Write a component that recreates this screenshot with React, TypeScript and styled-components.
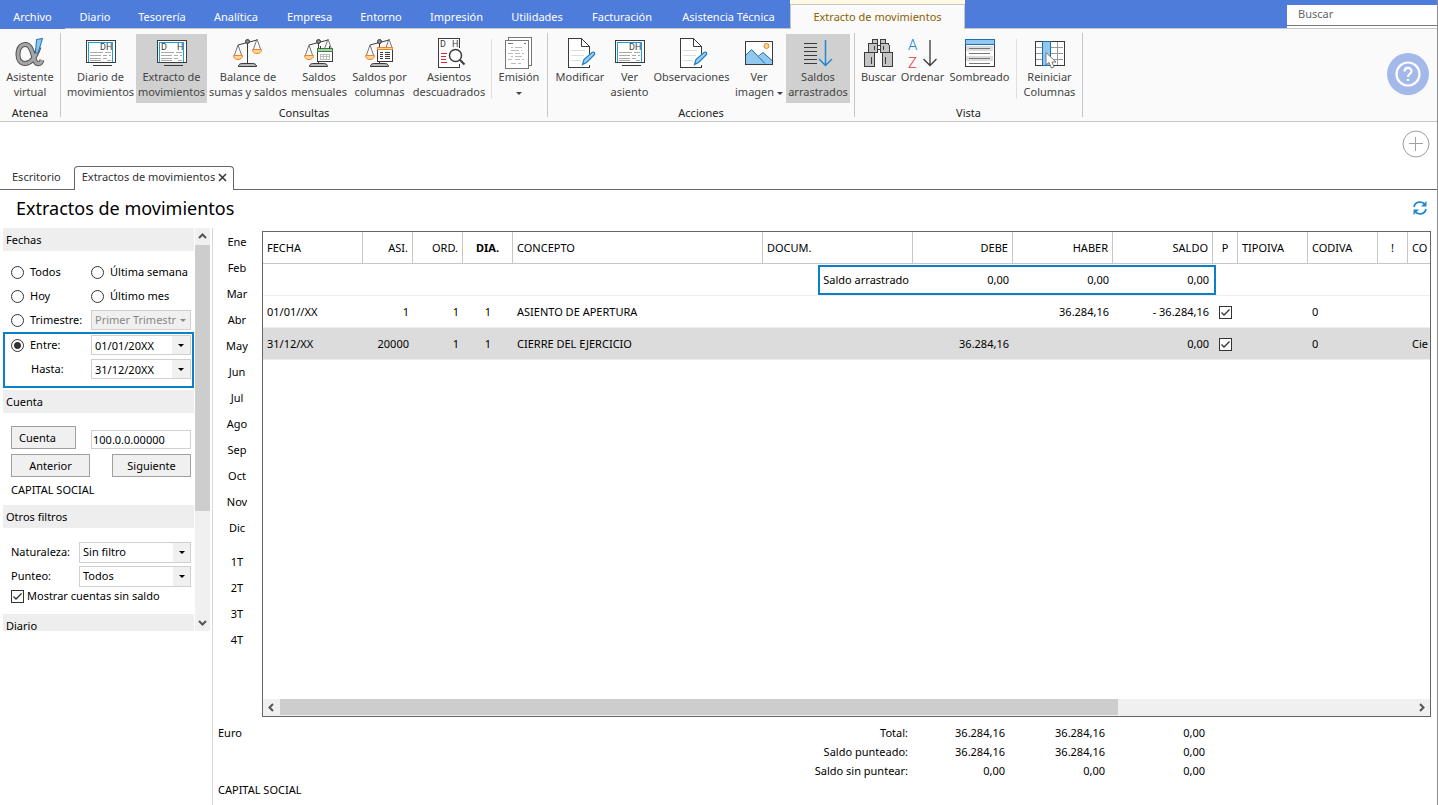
import React from "react";
import styled, { createGlobalStyle, css } from "styled-components";

const BLUE = "#4d7cdb";
const FRAME = "#0a80c8";
const INK = "#3b3b3b";

const GlobalStyle = createGlobalStyle`
  *, *::before, *::after { box-sizing: border-box; }
  body {
    margin: 0;
    background: #fff;
    color: #000;
    font-family: "Noto Sans", "Open Sans", sans-serif;
    font-size: 11px;
    line-height: 16px;
  }
  button, input, select { font: inherit; color: inherit; margin: 0; border-radius: 0; }
  button { background: none; border: 0; padding: 0; }
`;

const Page = styled.div`
  min-height: 100vh;
  display: flex;
  flex-direction: column;
  border-right: 1px solid #8c8c8c;
`;

/* ---------- menu bar ---------- */

const MenuBar = styled.nav`
  display: flex;
  height: 29px;
  background: linear-gradient(${BLUE} 28px, #c6c6c6 28px);
`;

const MenuItem = styled.button<{ $w: number; $solid?: boolean }>`
  width: ${(p) => p.$w}px;
  height: 29px;
  padding-top: 4px;
  color: #fff;
  white-space: nowrap;
  background: ${(p) => (p.$solid ? BLUE : "transparent")};
`;

const ActiveMenuWrap = styled.div`
  background: #fff8e3;
  padding-top: 4px;
  height: 29px;
`;

const ActiveMenu = styled.button`
  width: 175px;
  height: 25px;
  background: #fafafa;
  border: 1px solid #c6c6c6;
  border-bottom: 0;
  color: #8a6200;
`;

const SearchBox = styled.div`
  margin: 5px 0 1px auto;
  width: 150px;
  background: #fff;
`;

const SearchInput = styled.input`
  display: block;
  width: 100%;
  height: 21px;
  border: 0;
  border-bottom: 1px solid #777;
  padding: 0 11px 4px;
  outline: 0;
  background: #fff;
  &::placeholder { color: #666; opacity: 1; }
`;

/* ---------- ribbon ---------- */

const Ribbon = styled.header`
  display: flex;
  height: 93px;
  background: #fafafa;
  border-bottom: 1px solid #c6c6c6;
`;

const Group = styled.section<{ $pad: number }>`
  display: flex;
  flex-direction: column;
  padding: 5px ${(p) => p.$pad}px 0;
`;

const Tools = styled.div`
  display: flex;
  height: 71px;
`;

const GroupName = styled.div`
  text-align: center;
  color: #222;
`;

const Divider = styled.div`
  width: 1px;
  margin: 4px 0;
  background: #c6c6c6;
`;

const InnerDivider = styled.div`
  width: 1px;
  height: 59px;
  margin: 5px 3px 0;
  background: #dedede;
`;

const Tool = styled.button<{ $w: number; $on?: boolean }>`
  display: flex;
  flex-direction: column;
  align-items: center;
  width: ${(p) => p.$w}px;
  height: 69px;
  padding-top: 3px;
  color: #444;
  line-height: 15px;
  background: ${(p) => (p.$on ? "#d0d0d0" : "transparent")};
`;

const ToolText = styled.span`
  white-space: pre;
  text-align: center;
`;

const Help = styled.button`
  display: grid;
  place-items: center;
  width: 42px;
  height: 42px;
  margin: 24px 8px 0 auto;
  border-radius: 50%;
  background: #a4b9eb;
`;

const Caret = styled.span`
  display: inline-block;
  vertical-align: middle;
  border: 3px solid transparent;
  border-top-color: currentColor;
  border-bottom: 0;
`;

/* ---------- document tabs & title ---------- */

const AddRow = styled.div`
  display: flex;
  justify-content: flex-end;
  align-items: flex-start;
  height: 44px;
  padding: 8px 7px 0 0;
`;

const PlainButton = styled.button`
  display: grid;
  place-items: center;
`;

const DocTabs = styled.div`
  display: flex;
  height: 24px;
  box-shadow: inset 0 -1px #666;
  color: #333;
`;

const DocTab = styled.button<{ $active?: boolean }>`
  display: flex;
  align-items: center;
  gap: 3px;
  height: 24px;
  ${(p) =>
    p.$active
      ? css`
          padding: 0 6px 3px 7px;
          background: #fff;
          border: 1px solid #666;
          border-bottom: 0;
          border-radius: 4px 4px 0 0;
        `
      : css`
          padding: 0 13px 2px 12px;
        `}
`;

const TitleRow = styled.div`
  display: flex;
  justify-content: space-between;
  align-items: center;
  height: 38px;
  padding: 0 9px 3px 16px;
`;

const Title = styled.h1`
  margin: 0;
  font-size: 18px;
  line-height: 24px;
  font-weight: 400;
`;

/* ---------- sidebar ---------- */

const Main = styled.main`
  flex: 1;
  display: flex;
`;

const Sidebar = styled.aside`
  width: 213px;
  flex: none;
  border-right: 1px solid #d8d8d8;
  padding-left: 3px;
`;

const FilterArea = styled.div`
  display: flex;
  gap: 1px;
  height: 403px;
  overflow: hidden;
`;

const Filters = styled.div`
  width: 191px;
`;

const SectionTitle = styled.h2`
  margin: 0;
  height: 23px;
  padding: 4px 3px 0;
  font-size: 11px;
  line-height: 16px;
  font-weight: 400;
  background: #eee;
`;

const SectionBody = styled.div<{ $h: number; $top: number }>`
  height: ${(p) => p.$h}px;
  padding-top: ${(p) => p.$top}px;
`;

const Row = styled.div<{ $h: number; $first: number }>`
  display: grid;
  grid-template-columns: ${(p) => p.$first}px 1fr;
  align-items: center;
  height: ${(p) => p.$h}px;
  padding: 0 3px 0 8px;
`;

const Framed = styled.div`
  height: 56px;
  border: 2px solid ${FRAME};
  padding: 0 1px 0 0;
  ${Row} { padding: 0 0 2px 6px; height: 24px; }
`;

const Choice = styled.label`
  display: flex;
  align-items: center;
  gap: 6px;
  white-space: nowrap;
`;

const Indent = styled.label`
  padding-left: 20px;
`;

const Radio = styled.input.attrs({ type: "radio" })`
  appearance: none;
  flex: none;
  width: 13px;
  height: 13px;
  border: 1px solid #333;
  border-radius: 50%;
  background: #fff;
  &:checked { background: radial-gradient(circle, #333 3px, #fff 4px); }
`;

const CheckWrap = styled.span`
  position: relative;
  display: inline-block;
  flex: none;
  width: 13px;
  height: 13px;
  vertical-align: middle;
  svg { position: absolute; left: 0; top: 0; pointer-events: none; }
`;

const CheckInput = styled.input.attrs({ type: "checkbox" })`
  appearance: none;
  display: block;
  width: 13px;
  height: 13px;
  border: 1px solid #333;
  background: #fff;
`;

const Field = styled.div<{ $h: number; $off?: boolean }>`
  display: flex;
  position: relative;
  height: ${(p) => p.$h}px;
  border: 1px solid #d0d0d0;
  background: ${(p) => (p.$off ? "#f0f0f0" : "#fff")};
  color: ${(p) => (p.$off ? "#888" : "#000")};
  input, select {
    flex: 1;
    min-width: 0;
    width: 100%;
    height: 100%;
    border: 0;
    outline: 0;
    padding: 0 14px 0 3px;
    appearance: none;
    background: none;
    color: inherit;
    opacity: 1;
  }
  input { padding-right: 0; }
`;

const DropMark = styled.span<{ $off?: boolean }>`
  position: absolute;
  right: 0;
  top: 0;
  bottom: 0;
  width: ${(p) => (p.$off ? 14 : 17)}px;
  display: grid;
  place-items: center;
  background: #f0f0f0;
  pointer-events: none;
`;

const DropButton = styled.button`
  width: 18px;
  display: grid;
  place-items: center;
  background: #f0f0f0;
`;

const Spread = styled.div`
  display: flex;
  justify-content: space-between;
  align-items: flex-end;
  padding: 0 3px 0 8px;
  margin-bottom: 5px;
`;

const PushButton = styled.button<{ $w: number; $left?: boolean }>`
  width: ${(p) => p.$w}px;
  height: 23px;
  border: 1px solid #a0a0a0;
  background: #f0f0f0;
  text-align: ${(p) => (p.$left ? "left" : "center")};
  padding: 0 7px;
`;

const AccountField = styled(Field)`
  width: 100px;
  input { padding: 0 0 0 1px; }
`;

const AccountName = styled.div`
  padding-left: 8px;
`;

const VScroll = styled.div`
  display: flex;
  flex-direction: column;
  align-items: center;
  width: 15px;
  background: #f0f0f0;
`;

const VThumb = styled.div`
  width: 15px;
  height: 266px;
  background: #cdcdcd;
  margin-bottom: auto;
`;

const VArrow = styled.button`
  display: grid;
  place-items: center;
  width: 15px;
  height: 17px;
`;

/* ---------- periods ---------- */

const Periods = styled.div`
  width: 49px;
  flex: none;
  display: flex;
  flex-direction: column;
  padding: 1px 1px 0 0;
`;

const Period = styled.button<{ $gap?: boolean }>`
  height: 26px;
  margin-top: ${(p) => (p.$gap ? 8 : 0)}px;
`;

/* ---------- ledger ---------- */

const Content = styled.div`
  flex: 1;
  min-width: 0;
  display: flex;
  flex-direction: column;
`;

const LedgerRow = styled.div`
  flex: 1;
  display: flex;
`;

const LedgerBox = styled.div`
  flex: 1;
  min-width: 0;
  display: flex;
  flex-direction: column;
  justify-content: space-between;
  margin: 3px 6px 0 0;
  border: 1px solid #666;
  overflow: hidden;
`;

const Ledger = styled.table`
  width: 100%;
  table-layout: fixed;
  border-collapse: separate;
  border-spacing: 0;
`;

type Align = "left" | "right" | "center";

const Th = styled.th<{ $a: Align; $bold?: boolean }>`
  height: 32px;
  padding: 0 4px;
  font-weight: ${(p) => (p.$bold ? 700 : 400)};
  text-align: ${(p) => p.$a};
  white-space: nowrap;
  border-right: 1px solid #c6c6c6;
  border-bottom: 1px solid #c6c6c6;
  &:last-child { border-right: 0; padding-right: 0; }
`;

const Tr = styled.tr<{ $selected?: boolean }>`
  background: ${(p) => (p.$selected ? "#dcdcdc" : "#fff")};
`;

const Td = styled.td<{ $a: Align }>`
  height: 32px;
  padding: 0 4px;
  text-align: ${(p) => p.$a};
  white-space: nowrap;
  border-bottom: 1px solid #eee;
  &:last-child { padding-right: 0; }
`;

const CarriedCell = styled(Td)`
  position: relative;
  &::after {
    content: "";
    position: absolute;
    left: 55px;
    top: 1px;
    width: 398px;
    height: 30px;
    border: 2px solid ${FRAME};
    pointer-events: none;
  }
`;

const HScroll = styled.div`
  display: flex;
  height: 17px;
  background: #f0f0f0;
`;

const HArrow = styled.button`
  display: grid;
  place-items: center;
  width: 17px;
`;

const HTrack = styled.div`
  flex: 1;
`;

const HThumb = styled.div`
  width: 74%;
  height: 16px;
  background: #cdcdcd;
`;

/* ---------- footer ---------- */

const Footer = styled.footer`
  display: flex;
  height: 88px;
  padding: 6px 0 0 5px;
`;

const FooterInfo = styled.div`
  width: 545px;
  display: flex;
  flex-direction: column;
  justify-content: space-between;
  padding: 2px 0 7px;
`;

const Totals = styled.table`
  width: 442px;
  height: 57px;
  table-layout: fixed;
  border-collapse: collapse;
  th, td { height: 19px; padding: 0; font-weight: 400; text-align: right; white-space: nowrap; }
`;

/* ---------- icons ---------- */

const IconSvg = styled.svg`
  display: block;
  overflow: visible;
`;

const Icon = ({ children }: { children: React.ReactNode }) => (
  <IconSvg width="32" height="32" viewBox="0 0 32 32" fill="none" stroke={INK} aria-hidden="true">
    {children}
  </IconSvg>
);

const Letter = ({ x, y, size = 9, color = INK, weight = 400, children }: any) => (
  <text x={x} y={y} fontSize={size} fontWeight={weight} fill={color} stroke="none" fontFamily="Roboto, sans-serif">
    {children}
  </text>
);

const AlphaIcon = () => {
  const d = "M25 10C22 19 18 26.500 11 26.500C6.500 26.500 4 23 4 17.500C4 11 7 7.500 11.500 7.500C18 7.500 18.500 18 21 24C22.500 27.500 26.500 28 28 23";
  return (
    <Icon>
      <path d={d} stroke="#555" strokeWidth="5" />
      <path d={d} stroke="#a6a6a6" strokeWidth="3" />
      <path d="M22.500 2.500L28.500 1.500L24 16H21.500Z" fill="#8cc7ee" stroke="#1a70b8" />
    </Icon>
  );
};

const EntryIcon = ({ split }: { split?: boolean }) => (
  <Icon>
    <g shapeRendering="crispEdges">
      <rect x="1" y="3" width="29" height="22" fill="#fff" />
      <path d="M3.500 25V5.500H27.500V25" stroke="#18a0dc" />
      <path d="M8 28H27" />
      <path d="M5 15.500H18M5 18.500H16M5 21.500H16M5 23.500H16M20 15.500H26M18 18.500H22M24 18.500H26M18 21.500H22M22 23.500H26" stroke="#aaa" />
    </g>
    <Letter x={split ? 5 : 15} y="13">D</Letter>
    <Letter x="21" y="13">H</Letter>
  </Icon>
);

const ScaleIcon = ({ overlay }: { overlay?: "month" | "columns" }) => (
  <Icon>
    <path d="M6 8L25 3" />
    <path d="M6 8L2.500 18M6 8L9.500 18M25 2L21.500 12M25 2L28.500 12" stroke="#777" />
    <path d="M15.500 4V26" />
    <circle cx="15.500" cy="4.500" r="2" fill="#888" />
    <path d="M1.500 18.500H10.500C10.500 24 1.500 24 1.500 18.500Z" fill="#ffd591" stroke="#e8862e" />
    {!overlay && <path d="M20.500 12.500H29.500C29.500 18 20.500 18 20.500 12.500Z" fill="#ffd591" stroke="#e8862e" />}
    <path d="M6.500 29.500C6.500 27 8.500 26.500 11 26.500H20C22.500 26.500 24.500 27 24.500 29.500Z" fill="#b9b9b9" />
    {overlay === "month" && (
      <g shapeRendering="crispEdges">
        <rect x="14.500" y="11.500" width="15" height="13" fill="#fff" />
        <rect x="14.500" y="11.500" width="15" height="3" fill="#9fd3a2" stroke="#3d7a46" />
        <path d="M17.500 9V12M26.500 9V12" />
        <path d="M17 17.500H27M17 19.500H27M17 22.500H27M17.500 17V23M20.500 17V23M23.500 17V23M26.500 17V23" stroke="#bbb" />
      </g>
    )}
    {overlay === "columns" && (
      <g shapeRendering="crispEdges">
        <rect x="13.500" y="10.500" width="15" height="14" fill="#fff" />
        <rect x="13.500" y="10.500" width="15" height="2" fill="#ffd591" stroke="#e8862e" />
        <path d="M16 15.500H19M21 15.500H26M16 17.500H19M21 17.500H26M16 19.500H19M21 19.500H26M16 21.500H19M21 21.500H26" />
      </g>
    )}
  </Icon>
);

const UnbalancedIcon = () => (
  <Icon>
    <path d="M26.500 11V1.500H5.500V30.500H26.500V27" fill="#fff" shapeRendering="crispEdges" />
    <Letter x="7" y="10">D</Letter>
    <Letter x="19" y="10">H</Letter>
    <path d="M8 16.500H14M8 19.500H13M8 22.500H13M8 25.500H14" stroke="#e0203a" shapeRendering="crispEdges" />
    <circle cx="22.500" cy="18.500" r="6" fill="#fff" strokeWidth="1.500" />
    <path d="M27 23L31.500 27.500" strokeWidth="2" />
  </Icon>
);

const PrintIcon = () => (
  <Icon>
    <g shapeRendering="crispEdges" stroke="#777">
      <rect x="5.500" y="0.500" width="23" height="28" fill="#fff" />
      <rect x="2.500" y="3.500" width="23" height="28" fill="#fff" />
      <path d="M5 6.500H10M21 6.500H23" />
      <path d="M8 10.500H10M12 10.500H19M8 13.500H16M18 13.500H19M5 16.500H10M12 16.500H17M19 16.500H21M8 19.500H10M12 19.500H19M5 22.500H9M12 22.500H17M19 22.500H21M8 26.500H13M15 26.500H18" stroke="#bbb" />
    </g>
  </Icon>
);

const EditIcon = () => (
  <Icon>
    <g shapeRendering="crispEdges">
      <path d="M25.500 18V9.500L17.500 1.500H4.500V30.500H25.500V28" fill="#fff" />
      <path d="M7 13.500H21M7 18.500H20M7 23.500H17" stroke="#ddd" />
    </g>
    <path d="M17.500 1.500V9.500H25.500Z" fill="#fff" />
    <path d="M18.500 27.500L20 22.500L28 15.500C30.500 14.500 31.500 16.500 30 18L22.500 25.500Z" fill="#9fd0f0" stroke="#1a7fc4" strokeWidth="1.200" />
  </Icon>
);

const ImageIcon = () => (
  <Icon>
    <rect x="2.500" y="4.500" width="27" height="23" fill="#fff" />
    <path d="M3 18L8.500 12.500L16 20L20 15.500L29 23V27H3Z" fill="#92c8ee" stroke="none" />
    <path d="M3 18L8.500 12.500L22 26.500M15 19.500L20 15.500L29 23.500" stroke="#1a6fb0" />
    <circle cx="23.500" cy="9" r="2.500" fill="#ffd591" stroke="#e8862e" />
    <rect x="2.500" y="4.500" width="27" height="23" shapeRendering="crispEdges" />
  </Icon>
);

const CarryIcon = () => (
  <Icon>
    <path d="M2 6.500H15M2 10.500H15M2 14.500H15M2 18.500H15M2 22.500H15M2 26.500H15" shapeRendering="crispEdges" />
    <path d="M23.500 3V28M17 22L23.500 28.500L30 22" stroke="#2188d0" strokeWidth="1.500" />
  </Icon>
);

const BinocularsIcon = () => (
  <Icon>
    <g shapeRendering="crispEdges" fill="#c4c4c4">
      <rect x="9" y="2" width="5" height="4" />
      <rect x="17" y="2" width="5" height="4" />
      <path d="M6 6H14V15H5V8ZM17 6H25L26 8V15H17Z" />
      <path d="M14 8H17V12H14Z" fill="#fff" />
      <rect x="1" y="15" width="10" height="14" />
      <rect x="19" y="15" width="10" height="14" />
      <path d="M11 9V13M20 9V13M8 20V27M22 20V27" />
    </g>
  </Icon>
);

const SortIcon = () => (
  <Icon>
    <Letter x="1" y="13" size={15} weight={300} color="#2188d0">A</Letter>
    <Letter x="1" y="31" size={15} weight={300} color="#e83a3a">Z</Letter>
    <path d="M23 3V28M16.500 22L23 28.500L29.500 22" strokeWidth="1.300" />
  </Icon>
);

const ShadeIcon = () => (
  <Icon>
    <g shapeRendering="crispEdges">
      <rect x="1" y="2" width="29" height="27" fill="#fff" />
      <path d="M2 11H29M2 21H29" stroke="#dcdcdc" strokeWidth="5" />
      <path d="M5 11H26M5 16H26M5 21H26M5 26H26" stroke="#777" />
      <rect x="1" y="2" width="29" height="27" />
      <rect x="1" y="2" width="29" height="5" fill="#92c8ee" stroke="#1a6fb0" />
    </g>
  </Icon>
);

const ResetColumnsIcon = () => (
  <Icon>
    <g shapeRendering="crispEdges">
      <rect x="1" y="4" width="29" height="24" fill="#fff" />
      <path d="M2 10H29M2 16H29M2 22H29M23 5V28" stroke="#999" />
      <rect x="1" y="4" width="29" height="24" />
      <rect x="8" y="4" width="8" height="24" fill="#92c8ee" stroke="#1a6fb0" />
    </g>
    <path d="M12 15.500V28L15 25.500L17.500 31L20 30L18 25H22Z" fill="#fff" stroke="#777" />
  </Icon>
);

const Check = ({ label, bare }: { label?: string; bare?: boolean }) => (
  <CheckWrap>
    <CheckInput defaultChecked aria-label={bare ? label : undefined} id={bare ? undefined : "sin-saldo"} />
    <svg width="13" height="13" viewBox="0 0 13 13" fill="none" stroke="#333" strokeWidth="1.300">
      <path d="M2.500 6.500L5 9L10.500 3.500" />
    </svg>
  </CheckWrap>
);

const Chevron = ({ d }: { d: string }) => (
  <svg width="9" height="9" viewBox="0 0 9 9" fill="none" stroke="#555" strokeWidth="2" aria-hidden="true">
    <path d={d} />
  </svg>
);

/* ---------- data ---------- */

const menu: [string, number][] = [
  ["Archivo", 65], ["Diario", 60], ["Tesorería", 74], ["Analítica", 74], ["Empresa", 73],
  ["Entorno", 70], ["Impresión", 81], ["Utilidades", 80], ["Facturación", 90], ["Asistencia Técnica", 123],
];

const columns: { name: string; w?: number; a: Align; bold?: boolean }[] = [
  { name: "FECHA", w: 100, a: "left" },
  { name: "ASI.", w: 50, a: "right" },
  { name: "ORD.", w: 50, a: "right" },
  { name: "DIA.", w: 50, a: "center", bold: true },
  { name: "CONCEPTO", w: 250, a: "left" },
  { name: "DOCUM.", w: 150, a: "left" },
  { name: "DEBE", w: 100, a: "right" },
  { name: "HABER", w: 100, a: "right" },
  { name: "SALDO", w: 100, a: "right" },
  { name: "P", w: 25, a: "center" },
  { name: "TIPOIVA", w: 70, a: "left" },
  { name: "CODIVA", w: 70, a: "left" },
  { name: "!", w: 30, a: "center" },
  { name: "CO", a: "left" },
];

const entries = [
  { cells: ["01/01//XX", "1", "1", "1", "ASIENTO DE APERTURA", "", "", "36.284,16", "- 36.284,16", "P", "", "0", "", ""] },
  { cells: ["31/12/XX", "20000", "1", "1", "CIERRE DEL EJERCICIO", "", "36.284,16", "", "0,00", "P", "", "0", "", "Cie"], selected: true },
];

const months = ["Ene", "Feb", "Mar", "Abr", "May", "Jun", "Jul", "Ago", "Sep", "Oct", "Nov", "Dic"];
const quarters = ["1T", "2T", "3T", "4T"];

const totals = [
  ["Total:", "36.284,16", "36.284,16", "0,00"],
  ["Saldo punteado:", "36.284,16", "36.284,16", "0,00"],
  ["Saldo sin puntear:", "0,00", "0,00", "0,00"],
];

const RibbonTool = ({ w, icon, text, on, caret }: {
  w: number; icon: React.ReactNode; text: string; on?: boolean; caret?: boolean;
}) => (
  <Tool $w={w} $on={on} type="button">
    {icon}
    <ToolText>
      {text}
      {caret && <Caret />}
    </ToolText>
  </Tool>
);

export default function App() {
  return (
    <Page>
      <GlobalStyle />
      <MenuBar>
        {menu.map(([name, w], i) => (
          <MenuItem key={name} $w={w} $solid={i === 0} type="button">{name}</MenuItem>
        ))}
        <ActiveMenuWrap>
          <ActiveMenu type="button">Extracto de movimientos</ActiveMenu>
        </ActiveMenuWrap>
        <SearchBox>
          <SearchInput placeholder="Buscar" aria-label="Buscar" />
        </SearchBox>
      </MenuBar>

      <Ribbon>
        <Group $pad={0}>
          <Tools>
            <RibbonTool w={60} icon={<AlphaIcon />} text={"Asistente\nvirtual"} />
          </Tools>
          <GroupName>Atenea</GroupName>
        </Group>
        <Divider />
        <Group $pad={4}>
          <Tools>
            <RibbonTool w={71} icon={<EntryIcon />} text={"Diario de\nmovimientos"} />
            <RibbonTool w={71} icon={<EntryIcon split />} text={"Extracto de\nmovimientos"} on />
            <RibbonTool w={82} icon={<ScaleIcon />} text={"Balance de\nsumas y saldos"} />
            <RibbonTool w={60} icon={<ScaleIcon overlay="month" />} text={"Saldos\nmensuales"} />
            <RibbonTool w={61} icon={<ScaleIcon overlay="columns" />} text={"Saldos por\ncolumnas"} />
            <RibbonTool w={78} icon={<UnbalancedIcon />} text={"Asientos\ndescuadrados"} />
            <InnerDivider />
            <RibbonTool w={48} icon={<PrintIcon />} text={"Emisión\n"} caret />
          </Tools>
          <GroupName>Consultas</GroupName>
        </Group>
        <Divider />
        <Group $pad={4}>
          <Tools>
            <RibbonTool w={56} icon={<EditIcon />} text="Modificar" />
            <RibbonTool w={43} icon={<EntryIcon />} text={"Ver\nasiento"} />
            <RibbonTool w={81} icon={<EditIcon />} text="Observaciones" />
            <RibbonTool w={54} icon={<ImageIcon />} text={"Ver\nimagen "} caret />
            <RibbonTool w={64} icon={<CarryIcon />} text={"Saldos\narrastrados"} on />
          </Tools>
          <GroupName>Acciones</GroupName>
        </Group>
        <Divider />
        <Group $pad={3}>
          <Tools>
            <RibbonTool w={41} icon={<BinocularsIcon />} text="Buscar" />
            <RibbonTool w={47} icon={<SortIcon />} text="Ordenar" />
            <RibbonTool w={67} icon={<ShadeIcon />} text="Sombreado" />
            <InnerDivider />
            <RibbonTool w={59} icon={<ResetColumnsIcon />} text={"Reiniciar\nColumnas"} />
          </Tools>
          <GroupName>Vista</GroupName>
        </Group>
        <Divider />
        <Help type="button" aria-label="Ayuda">
          <svg width="26" height="26" viewBox="0 0 26 26" fill="none" stroke="#fff" strokeWidth="2.200">
            <circle cx="13" cy="13" r="11.500" />
            <path d="M9.500 10.500C9.500 5.800 16.500 5.800 16.500 10.200C16.500 12.800 13 12.800 13 16" />
            <path d="M13 18V20" />
          </svg>
        </Help>
      </Ribbon>

      <AddRow>
        <PlainButton type="button" aria-label="Añadir">
          <svg width="28" height="28" viewBox="0 0 28 28" fill="none" stroke="#a0a0a0">
            <circle cx="14" cy="14" r="13" />
            <path d="M7 13.500H21M13.500 7V21" />
          </svg>
        </PlainButton>
      </AddRow>

      <DocTabs>
        <DocTab type="button">Escritorio</DocTab>
        <DocTab type="button" $active>
          Extractos de movimientos
          <svg width="9" height="9" viewBox="0 0 9 9" stroke="#333" strokeWidth="1.500" aria-hidden="true">
            <path d="M1 1L8 8M8 1L1 8" />
          </svg>
        </DocTab>
      </DocTabs>

      <TitleRow>
        <Title>Extractos de movimientos</Title>
        <PlainButton type="button" aria-label="Actualizar">
          <svg width="16" height="16" viewBox="0 0 16 16" fill="none" stroke="#1f8ad0" strokeWidth="1.800">
            <path d="M2 7C3 1.500 10 0.500 13 4.500M14 9C13 14.500 6 15.500 3 11.500" />
            <path d="M14.500 1V6.500H9ZM1.500 15V9.500H7Z" fill="#1f8ad0" stroke="none" />
          </svg>
        </PlainButton>
      </TitleRow>

      <Main>
        <Sidebar>
          <FilterArea>
            <Filters>
              <SectionTitle>Fechas</SectionTitle>
              <SectionBody $h={139} $top={9}>
                <Row $h={24} $first={80}>
                  <Choice><Radio name="fechas" />Todos</Choice>
                  <Choice><Radio name="fechas" />Última semana</Choice>
                </Row>
                <Row $h={24} $first={80}>
                  <Choice><Radio name="fechas" />Hoy</Choice>
                  <Choice><Radio name="fechas" />Último mes</Choice>
                </Row>
                <Row $h={24} $first={80}>
                  <Choice><Radio name="fechas" />Trimestre:</Choice>
                  <Field $h={20} $off>
                    <select disabled aria-label="Trimestre"><option>Primer Trimestr</option></select>
                    <DropMark $off><Caret /></DropMark>
                  </Field>
                </Row>
                <Framed>
                  <Row $h={24} $first={80}>
                    <Choice><Radio name="fechas" defaultChecked />Entre:</Choice>
                    <Field $h={20}>
                      <input defaultValue="01/01/20XX" aria-label="Entre" />
                      <DropButton type="button" aria-label="Abrir calendario"><Caret /></DropButton>
                    </Field>
                  </Row>
                  <Row $h={24} $first={80}>
                    <Indent htmlFor="hasta">Hasta:</Indent>
                    <Field $h={20}>
                      <input id="hasta" defaultValue="31/12/20XX" />
                      <DropButton type="button" aria-label="Abrir calendario"><Caret /></DropButton>
                    </Field>
                  </Row>
                </Framed>
              </SectionBody>

              <SectionTitle>Cuenta</SectionTitle>
              <SectionBody $h={92} $top={13}>
                <Spread>
                  <PushButton $w={65} $left type="button">Cuenta</PushButton>
                  <AccountField $h={19}>
                    <input defaultValue="100.0.0.00000" aria-label="Cuenta" />
                  </AccountField>
                </Spread>
                <Spread>
                  <PushButton $w={79} type="button">Anterior</PushButton>
                  <PushButton $w={79} type="button">Siguiente</PushButton>
                </Spread>
                <AccountName>CAPITAL SOCIAL</AccountName>
              </SectionBody>

              <SectionTitle>Otros filtros</SectionTitle>
              <SectionBody $h={86} $top={12}>
                <Row $h={24} $first={68}>
                  <label htmlFor="naturaleza">Naturaleza:</label>
                  <Field $h={21}>
                    <select id="naturaleza"><option>Sin filtro</option></select>
                    <DropMark><Caret /></DropMark>
                  </Field>
                </Row>
                <Row $h={24} $first={68}>
                  <label htmlFor="punteo">Punteo:</label>
                  <Field $h={21}>
                    <select id="punteo"><option>Todos</option></select>
                    <DropMark><Caret /></DropMark>
                  </Field>
                </Row>
                <Row $h={16} $first={16}>
                  <Check />
                  <label htmlFor="sin-saldo">Mostrar cuentas sin saldo</label>
                </Row>
              </SectionBody>

              <SectionTitle>Diario</SectionTitle>
            </Filters>
            <VScroll>
              <VArrow type="button" aria-label="Subir"><Chevron d="M1 6L4.500 2.500L8 6" /></VArrow>
              <VThumb />
              <VArrow type="button" aria-label="Bajar"><Chevron d="M1 3L4.500 6.500L8 3" /></VArrow>
            </VScroll>
          </FilterArea>
        </Sidebar>

        <Content>
          <LedgerRow>
            <Periods>
              {months.map((m) => <Period key={m} type="button">{m}</Period>)}
              {quarters.map((q, i) => <Period key={q} type="button" $gap={i === 0}>{q}</Period>)}
            </Periods>
            <LedgerBox>
              <Ledger>
                <colgroup>
                  {columns.map((c) => <col key={c.name} width={c.w} />)}
                </colgroup>
                <thead>
                  <tr>
                    {columns.map((c) => <Th key={c.name} $a={c.a} $bold={c.bold}>{c.name}</Th>)}
                  </tr>
                </thead>
                <tbody>
                  <Tr>
                    <Td $a="left" colSpan={5} />
                    <CarriedCell $a="right">Saldo arrastrado</CarriedCell>
                    <Td $a="right">0,00</Td>
                    <Td $a="right">0,00</Td>
                    <Td $a="right">0,00</Td>
                    <Td $a="left" colSpan={5} />
                  </Tr>
                  {entries.map((e) => (
                    <Tr key={e.cells[0]} $selected={e.selected}>
                      {e.cells.map((value, i) => (
                        <Td key={columns[i].name} $a={columns[i].a}>
                          {columns[i].name === "P" ? <Check bare label="Punteado" /> : value}
                        </Td>
                      ))}
                    </Tr>
                  ))}
                </tbody>
              </Ledger>
              <HScroll>
                <HArrow type="button" aria-label="Izquierda"><Chevron d="M6 1L2.500 4.500L6 8" /></HArrow>
                <HTrack><HThumb /></HTrack>
                <HArrow type="button" aria-label="Derecha"><Chevron d="M3 1L6.500 4.500L3 8" /></HArrow>
              </HScroll>
            </LedgerBox>
          </LedgerRow>

          <Footer>
            <FooterInfo>
              <span>Euro</span>
              <span>CAPITAL SOCIAL</span>
            </FooterInfo>
            <Totals>
              <colgroup>
                <col width={145} />
                <col width={97} />
                <col width={100} />
                <col width={100} />
              </colgroup>
              <tbody>
                {totals.map(([label, ...values]) => (
                  <tr key={label}>
                    <th scope="row">{label}</th>
                    {values.map((v, i) => <td key={i}>{v}</td>)}
                  </tr>
                ))}
              </tbody>
            </Totals>
          </Footer>
        </Content>
      </Main>
    </Page>
  );
}
